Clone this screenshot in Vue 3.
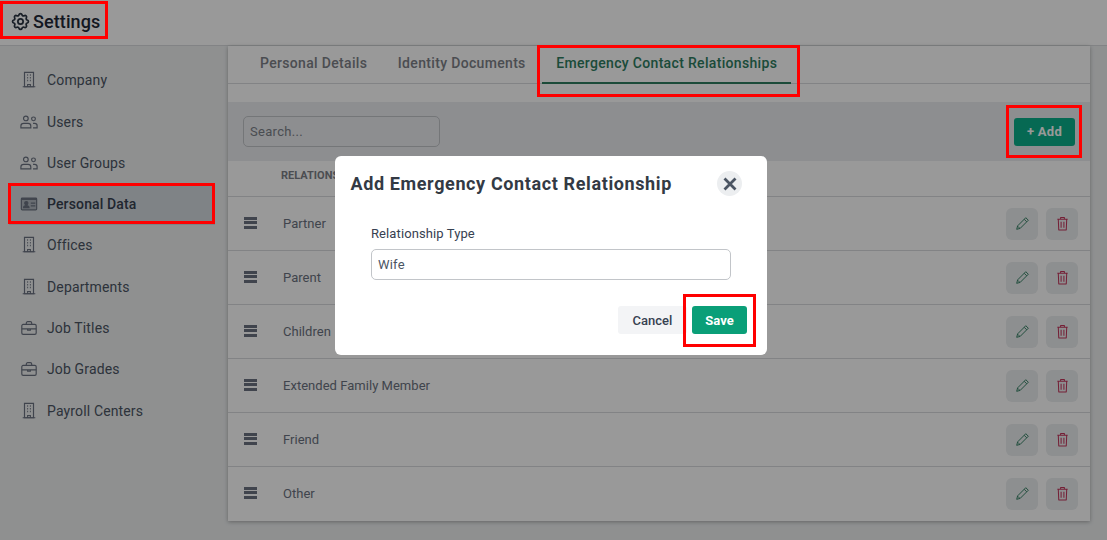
<script setup>
const navItems = [
  { label: 'Company', icon: 'building' },
  { label: 'Users', icon: 'users' },
  { label: 'User Groups', icon: 'users' },
  { label: 'Personal Data', icon: 'card', active: true },
  { label: 'Offices', icon: 'building' },
  { label: 'Departments', icon: 'building' },
  { label: 'Job Titles', icon: 'case' },
  { label: 'Job Grades', icon: 'case' },
  { label: 'Payroll Centers', icon: 'building' },
]
const rows = ['Partner', 'Parent', 'Children', 'Extended Family Member', 'Friend', 'Other']
</script>

<template>
  <div class="page">
    <header class="topbar">
      <svg class="gear" viewBox="0 0 24 24" fill="none" stroke="currentColor" stroke-width="2" stroke-linecap="round" stroke-linejoin="round">
        <path d="M10.3 4.3c.4-1.8 3-1.8 3.4 0a1.7 1.7 0 0 0 2.6 1.1c1.5-.9 3.3.8 2.4 2.4a1.7 1.7 0 0 0 1 2.5c1.8.4 1.8 3 0 3.4a1.7 1.7 0 0 0-1 2.6c.9 1.5-.9 3.3-2.4 2.4a1.7 1.7 0 0 0-2.6 1c-.4 1.8-3 1.8-3.4 0a1.7 1.7 0 0 0-2.6-1c-1.5.9-3.3-.9-2.4-2.4a1.7 1.7 0 0 0-1-2.6c-1.8-.4-1.8-3 0-3.4a1.7 1.7 0 0 0 1-2.5c-.9-1.6.9-3.3 2.4-2.4a1.7 1.7 0 0 0 2.6-1.1z"/>
        <circle cx="12" cy="12" r="3"/>
      </svg>
      <span class="brand">Settings</span>
    </header>

    <div class="body">
      <nav class="sidebar">
        <a v-for="item in navItems" :key="item.label" class="nav-item" :class="{ active: item.active }">
          <svg class="nav-icon" viewBox="0 0 20 20" fill="none" stroke="currentColor" stroke-width="1.3">
            <template v-if="item.icon === 'building'">
              <path d="M5 1.500h10v16H5z"/>
              <path d="M3 17.500h14M8.500 17.500v-2.500h3v2.500"/>
              <path d="M8 4.500h1M11 4.500h1M8 7.500h1M11 7.500h1M8 10.500h1M11 10.500h1" stroke-width="1.600"/>
            </template>
            <template v-else-if="item.icon === 'users'">
              <circle cx="6.500" cy="6" r="2.600"/>
              <path d="M1 16.500v-2c0-2 1.300-3 3-3h5c1.700 0 3 1 3 3v2z"/>
              <circle cx="15" cy="6.500" r="2.100"/>
              <path d="M14.500 11.500h1.800c1.500 0 2.700 1 2.700 2.500v2.500h-4.500"/>
            </template>
            <template v-else-if="item.icon === 'card'">
              <rect x="1.500" y="3.500" width="17" height="13" rx="1" fill="currentColor" fill-opacity=".35"/>
              <path d="M1.500 4.500h17" stroke-width="2"/>
              <circle cx="7" cy="9" r="1.800" fill="currentColor"/>
              <path d="M4 14c0-3 6-3 6 0z" fill="currentColor"/>
              <path d="M12 9h5M12 12h5"/>
            </template>
            <template v-else>
              <rect x="2" y="6" width="16" height="11" rx="1.500"/>
              <path d="M7 6V4.500C7 3.700 7.700 3 8.500 3h3c.8 0 1.500.7 1.500 1.500V6M2 11h16M8.500 11v1.500h3V11"/>
            </template>
          </svg>
          <span>{{ item.label }}</span>
        </a>
      </nav>

      <main class="card">
        <div class="tabs">
          <span class="tab">Personal Details</span>
          <span class="tab">Identity Documents</span>
          <span class="tab selected">Emergency Contact Relationships</span>
        </div>
        <div class="toolbar">
          <input class="search" placeholder="Search..." />
          <button class="add">+ Add</button>
        </div>
        <div class="table-head">RELATIONSHIP TYPE</div>
        <div v-for="row in rows" :key="row" class="row">
          <span class="drag"><i></i><i></i><i></i></span>
          <span class="row-label">{{ row }}</span>
          <span class="actions">
            <button class="icon-btn edit">
              <svg viewBox="0 0 16 16" fill="none" stroke="currentColor" stroke-width="1" stroke-linejoin="round">
                <path d="M11.500 1.800l2.700 2.700-8.700 8.700-3.700 1 1-3.700z"/>
                <path d="M9.800 3.500l2.700 2.700M3 11l2 2"/>
              </svg>
            </button>
            <button class="icon-btn del">
              <svg viewBox="0 0 16 16" fill="none" stroke="currentColor" stroke-width="1.100" stroke-linejoin="round">
                <path d="M2.500 3.500h11M6 3.500V1.500h4v2M3.500 3.500l.5 11.500h8l.5-11.500z"/>
                <path d="M6.500 6v6.500M9.500 6v6.500"/>
              </svg>
            </button>
          </span>
        </div>
      </main>
    </div>

    <div class="backdrop">
      <section class="modal">
        <div class="modal-head">
          <h2>Add Emergency Contact Relationship</h2>
          <button class="close">
            <svg viewBox="0 0 14 14" fill="none" stroke="currentColor" stroke-width="2.800">
              <path d="M1.500 1.500l11 11M12.500 1.500l-11 11"/>
            </svg>
          </button>
        </div>
        <div class="modal-body">
          <label class="field-label">Relationship Type</label>
          <input class="field" value="Wife" />
        </div>
        <div class="modal-foot">
          <button class="cancel">Cancel</button>
          <button class="save">Save</button>
        </div>
      </section>
    </div>

    <div class="mark m1"></div>
    <div class="mark m2"></div>
    <div class="mark m3"></div>
    <div class="mark m4"></div>
    <div class="mark m5"></div>
  </div>
</template>

<style>
html, body { margin: 0; background: #f3f4f6; }
</style>

<style scoped>
* { box-sizing: border-box; }
.page {
  position: relative;
  width: 1107px;
  height: 540px;
  overflow: hidden;
  background: #eef0f1;
  font-family: Roboto, "Liberation Sans", sans-serif;
  color: #374151;
}
.topbar {
  height: 46px;
  display: flex;
  align-items: center;
  gap: 2px;
  padding: 0 0 3px 10px;
  background: #fff;
  border-bottom: 1px solid #d9dbde;
}
.gear { width: 21px; height: 21px; color: #2a3442; }
.brand { font-size: 18px; font-weight: 500; color: #1f2937; letter-spacing: .1px; }
.body { display: flex; }
.sidebar { width: 228px; padding: 13.600px 13px 0 9px; }
.nav-item {
  height: 41.3px;
  display: flex;
  align-items: center;
  gap: 9px;
  padding-left: 11px;
  font-size: 14px;
  letter-spacing: .14px;
  color: #4b5563;
}
.nav-item.active { background: #d4dbe0; color: #374151; font-weight: 500; }
.nav-icon { width: 18px; height: 18px; color: #6b7280; flex: none; }
.card {
  width: 862px;
  height: 475px;
  background: #fff;
  box-shadow: 0 1px 4px rgba(0, 0, 0, .3);
}
.tabs {
  height: 38px;
  display: flex;
  border-bottom: 1px solid #d9dbde;
  padding-left: 17px;
}
.tab {
  padding: 9px 15px 0;
  font-size: 14px;
  font-weight: 500;
  letter-spacing: .33px;
  color: #7d8188;
  height: 38px;
}
.tab + .tab { margin-left: .5px; }
.tab.selected {
  height: 38px;
  margin-left: 1.500px;
  padding: 9px 14px 0;
  color: #2e7d5f;
  border-bottom: 2px solid #2e7d5f;
}
.toolbar {
  margin-top: 18px;
  height: 59px;
  display: flex;
  align-items: center;
  justify-content: space-between;
  padding: 0 15px;
  background: #ebedf0;
}
.search {
  width: 197px;
  height: 31px;
  padding: 0 6px;
  border: 1px solid #c2c5c9;
  border-radius: 5px;
  background: transparent;
  font: 13px Roboto, sans-serif;
  letter-spacing: .3px;
}
.search::placeholder { color: #7b8088; }
.add {
  width: 61px;
  height: 28px;
  border: 0;
  border-radius: 3px;
  background: #0bb08a;
  color: #fff;
  font: 700 13px Roboto, sans-serif;
  letter-spacing: .3px;
}
.table-head {
  height: 36px;
  padding: 8px 0 0 53px;
  border-bottom: 1px solid #d9dbde;
  font-size: 11px;
  font-weight: 700;
  color: #7d8188;
}
.row {
  height: 54px;
  display: flex;
  align-items: center;
  padding: 0 12px 0 16px;
  border-bottom: 1px solid #d9dbde;
  font-size: 13px;
  letter-spacing: .03px;
  color: #6b7280;
}
.row:last-child { border-bottom-color: transparent; }
.drag { width: 39px; display: flex; flex-direction: column; gap: 1.500px; margin-top: -2px; }
.drag i { display: block; width: 13px; height: 3px; background: #6b7280; }
.row-label { flex: 1; }
.actions { display: flex; gap: 8px; }
.icon-btn {
  width: 32px;
  height: 32px;
  border: 0;
  padding: 0;
  border-radius: 6px;
  background: #eceef0;
  display: flex;
  align-items: center;
  justify-content: center;
}
.icon-btn svg { width: 15px; height: 15px; }
.edit { color: #2e7d5f; }
.del { color: #c2355a; }
.backdrop {
  position: absolute;
  inset: 0;
  display: flex;
  justify-content: center;
  align-items: flex-start;
  padding: 156px 5px 0 0;
  background: rgba(0, 0, 0, .4);
}
.modal {
  width: 432px;
  height: 199px;
  background: #fff;
  border-radius: 6px;
}
.modal-head {
  display: flex;
  align-items: center;
  justify-content: space-between;
  padding: 15px 25px 0 15.500px;
}
h2 {
  margin: 0;
  font-size: 18px;
  font-weight: 700;
  letter-spacing: .62px;
  color: #333a44;
}
.close {
  width: 25px;
  height: 25px;
  border: 0;
  padding: 0;
  border-radius: 50%;
  background: #eceef0;
  color: #4b5563;
  display: flex;
  align-items: center;
  justify-content: center;
}
.close svg { width: 14px; height: 14px; }
.modal-body { padding: 30px 36px 0; }
.field-label {
  display: block;
  font-size: 13px;
  letter-spacing: .1px;
  color: #374151;
  margin-bottom: 8px;
}
.field {
  display: block;
  width: 360px;
  height: 31px;
  padding: 0 6px;
  border: 1px solid #c2c5c9;
  border-radius: 5px;
  font: 13px Roboto, sans-serif;
  letter-spacing: .2px;
  color: #4b5563;
}
.modal-foot {
  display: flex;
  justify-content: flex-end;
  gap: 5px;
  padding: 26px 20px 0 0;
}
.cancel, .save {
  height: 28px;
  border: 0;
  border-radius: 3px;
  font: 500 13px Roboto, sans-serif;
}
.cancel { width: 69px; background: #f3f4f6; color: #374151; }
.save { width: 55px; background: #0a9f78; color: #fff; font-weight: 700; }
.mark { position: absolute; border: 3px solid #f00; }
.m1 { left: 0; top: 1px; width: 108px; height: 38px; }
.m2 { left: 537px; top: 45px; width: 263px; height: 52px; }
.m3 { left: 1006px; top: 105px; width: 76px; height: 53px; }
.m4 { left: 8px; top: 183px; width: 207px; height: 41px; }
.m5 { left: 683px; top: 294px; width: 73px; height: 53px; }
</style>
